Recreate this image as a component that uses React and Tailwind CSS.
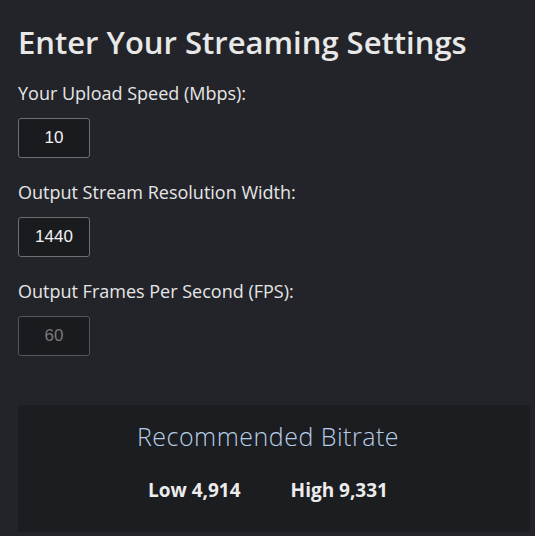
export default function App() {
  const fields = [
    { label: "Your Upload Speed (Mbps):", value: "10" },
    { label: "Output Stream Resolution Width:", value: "1440" },
    { label: "Output Frames Per Second (FPS):", value: "60", disabled: true },
  ];

  return (
    <div className="min-h-[536px] bg-[#232429] pl-[18px] pt-[22px] font-['Open_Sans',sans-serif] text-[#e6e6e6]">
      <h1 className="text-[31px] font-semibold leading-[40px] text-[#e8e8e8]">Enter Your Streaming Settings</h1>

      <div className="mt-[19px] flex flex-col">
        {fields.map((f) => (
          <div key={f.label} className="mb-[22px] flex flex-col">
            <label className="text-[18px] leading-[24px] text-[#e6e6e6]">{f.label}</label>
            <input
              readOnly
              disabled={f.disabled}
              value={f.value}
              className={
                "mt-[13px] h-[40px] w-[72px] rounded-[3px] border border-[#6e6e70] bg-[#1a1b1e] text-center font-['Liberation_Sans',Arial,sans-serif] text-[17px] outline-none " +
                (f.disabled ? "border-[#55565a] text-[#77787b]" : "text-[#f2f2f2]")
              }
            />
          </div>
        ))}
      </div>

      <div className="mt-[27px] w-[512px] rounded-[4px] bg-[#1c1d21] pb-[29px] pr-[12px] pt-[15px]">
        <div className="text-center text-[25px] font-light leading-[32px] tracking-[0.5px] text-[#b5cde6]">
          Recommended Bitrate
        </div>
        <div className="mt-[25px] flex justify-center gap-[50px] text-[19px] font-bold leading-[26px] text-[#ececec]">
          <span>Low 4,914</span>
          <span>High 9,331</span>
        </div>
      </div>
    </div>
  );
}
